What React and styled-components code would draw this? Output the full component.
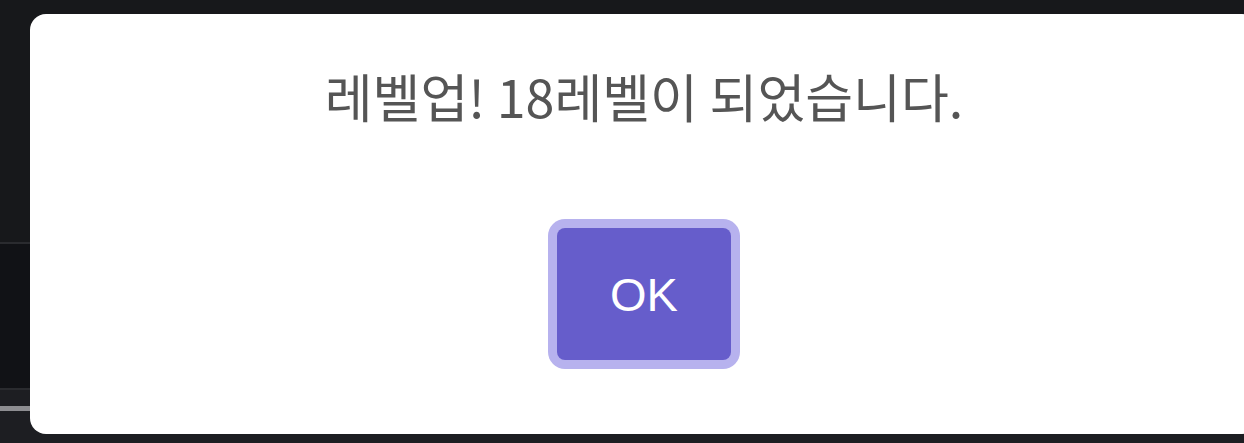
import styled, { createGlobalStyle } from "styled-components";

const GlobalStyle = createGlobalStyle`
  html, body {
    margin: 0;
    padding: 0;
    height: 100%;
    overflow: hidden;
    background: #17181b;
  }
  #root {
    height: 100%;
  }
`;

const Backdrop = styled.div`
  display: flex;
  flex-direction: column;
  height: 100%;
`;

const TopArea = styled.div`
  height: 242px;
  background: #17181b;
  border-bottom: 2px solid #2a2b2f;
`;

const ListArea = styled.div`
  height: 144px;
  background: #111216;
  border-bottom: 2px solid #2a2b2f;
`;

const Footer = styled.div`
  flex: 1;
  background: #1d1e22;
  padding-top: 16px;
`;

const Progress = styled.div`
  height: 5px;
  width: 100%;
  background: #8d8d91;
`;

const Dialog = styled.div`
  position: fixed;
  left: 30px;
  top: 14px;
  width: 1228px;
  height: 420px;
  background: #ffffff;
  border-radius: 16px;
  display: flex;
  flex-direction: column;
  align-items: center;
  box-sizing: border-box;
  padding-top: 50px;
`;

const Message = styled.p`
  margin: 0;
  font-family: "Noto Sans CJK KR", "Noto Sans", sans-serif;
  font-size: 52px;
  line-height: 64px;
  color: #555555;
`;

const OkButton = styled.button`
  margin-top: 100px;
  width: 174px;
  height: 132px;
  border: none;
  border-radius: 8px;
  background: #665dcb;
  color: #ffffff;
  font-family: "Liberation Sans", Arial, sans-serif;
  font-size: 47px;
  box-shadow: 0 0 0 9px #b7b2ee;
  cursor: pointer;
`;

export default function App() {
  return (
    <>
      <GlobalStyle />
      <Backdrop>
        <TopArea />
        <ListArea />
        <Footer>
          <Progress />
        </Footer>
      </Backdrop>
      <Dialog role="dialog">
        <Message>레벨업! 18레벨이 되었습니다.</Message>
        <OkButton>OK</OkButton>
      </Dialog>
    </>
  );
}
